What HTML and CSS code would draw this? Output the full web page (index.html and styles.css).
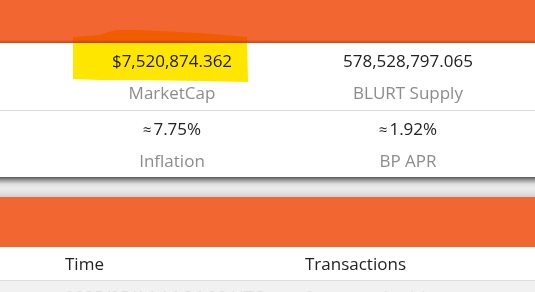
FILE: index.html
```html
<!DOCTYPE html>
<html lang="en">
<head>
  <meta charset="UTF-8">
  <meta name="viewport" content="width=device-width, initial-scale=1.0">
  <title>Blurt Stats</title>
  <link rel="stylesheet" href="styles.css">
</head>
<body>
  <div class="band band-top"></div>
  <section class="stats">
    <div class="stat-row">
      <div class="stat">
        <div class="stat-value">$7,520,874.362</div>
        <div class="stat-label">MarketCap</div>
      </div>
      <div class="stat">
        <div class="stat-value">578,528,797.065</div>
        <div class="stat-label">BLURT Supply</div>
      </div>
    </div>
    <div class="stat-row">
      <div class="stat">
        <div class="stat-value"><span class="approx">&asymp;</span>7.75%</div>
        <div class="stat-label">Inflation</div>
      </div>
      <div class="stat">
        <div class="stat-value"><span class="approx">&asymp;</span>1.92%</div>
        <div class="stat-label">BP APR</div>
      </div>
    </div>
  </section>
  <div class="shadow"></div>
  <div class="band band-mid"></div>
  <table class="tx">
    <thead>
      <tr><th>Time</th><th>Transactions</th></tr>
    </thead>
    <tbody>
      <tr><td>2025/05/14 14:34:29 UTC</td><td>2 transaction(s)</td></tr>
    </tbody>
  </table>

  <!-- marker highlight over the market cap -->
  <svg class="marker" width="535" height="90" viewBox="0 0 535 90">
    <path d="M73,37 L100,35 L108,32 L116,30 L140,30 L200,33 L247,37 L248,82 L200,81 L140,80 L100,80 L73,79 Z" fill="#ffe600"/>
  </svg>
</body>
</html>
```

FILE: styles.css
```css
body {
  margin: 0;
  font-family: "Open Sans", "DejaVu Sans", sans-serif;
  font-size: 17px;
  background-color: #fff;
  color: #222;
  width: 535px;
  height: 292px;
  overflow: hidden;
  position: relative;
}
.band {
  background-color: #f26631;
}
.band-top {
  height: 43px;
  background: linear-gradient(#f26631 0, #f26631 40px, #dc5a24 41px, #c04c1c 43px);
}
.band-mid {
  height: 50px;
}
.stat-row {
  display: grid;
  grid-template-columns: 236px 236px;
  padding-left: 54px;
  border-bottom: 1px solid #ddd;
}
.stat-row:last-child {
  border-bottom: none;
}
.stat {
  text-align: center;
  padding-top: 2px;
  padding-bottom: 1px;
}
.stat-row:last-child .stat {
  padding-bottom: 0;
}
.stat-value {
  line-height: 32px;
  color: #222;
}
.approx {
  margin-right: 2px;
  font-size: 15px;
}
.stat-label {
  line-height: 32px;
  color: #8c8c8c;
}
.shadow {
  height: 20px;
  background: linear-gradient(#555 0, #9a9a9a 3px, #dedede 7px, #ececec 11px, #e2e2e2 16px, #cfcfcf 20px);
}
.tx {
  width: 100%;
  border-collapse: collapse;
}
.tx th {
  text-align: left;
  font-weight: normal;
  height: 33px;
  padding: 0;
  border-bottom: 1px solid #ddd;
}
.tx th:first-child,
.tx td:first-child {
  padding-left: 65px;
  width: 240px;
}
.tx td {
  background-color: #f1f1f1;
  color: #ddd;
  padding: 6px 0 6px 65px;
  line-height: 20px;
}
.tx td + td {
  padding-left: 0;
}
.marker {
  position: absolute;
  top: 0;
  left: 0;
  mix-blend-mode: multiply;
  pointer-events: none;
}
```
